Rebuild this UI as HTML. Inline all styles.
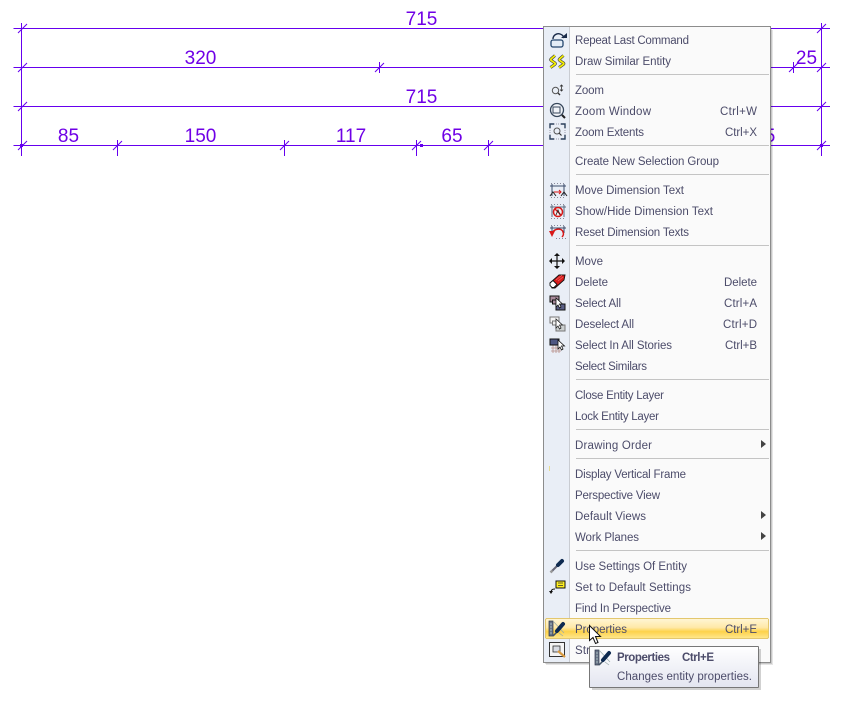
<!DOCTYPE html>
<html><head><meta charset="utf-8"><style>
html,body{margin:0;padding:0;background:#fff}
svg{display:block}
.d{font:19px "Liberation Sans",sans-serif;fill:#6f00e6;text-anchor:middle}
.m text{font:11.5px "Liberation Sans",sans-serif;fill:#4c4c6a}
</style></head><body>
<svg width="845" height="728" viewBox="0 0 845 728" xmlns="http://www.w3.org/2000/svg" shape-rendering="crispEdges">
<defs>
<linearGradient id="hl" x1="0" y1="0" x2="0" y2="1"><stop offset="0" stop-color="#fff6d6"/><stop offset=".45" stop-color="#ffe9a8"/><stop offset=".65" stop-color="#fdd24a"/><stop offset="1" stop-color="#ffe88f"/></linearGradient>
<linearGradient id="tt" x1="0" y1="0" x2="0" y2="1"><stop offset="0" stop-color="#fff"/><stop offset="1" stop-color="#e3e5f0"/></linearGradient>
</defs>
<rect width="845" height="728" fill="#fff"/>
<!-- drawing -->
<g stroke="#6600ee" stroke-width="1" fill="none">
<path d="M13.5 28.5H830M13.5 67.5H830M13.5 106.5H830M13.5 145.5H830M21.5 23V156M821.5 23V156"/>
<path d="M117.5 140V156M284.5 140V156M416.5 140V156M488.500 140V156M379.500 62V73M793.500 62V73"/>
<g shape-rendering="auto">
<path d="M18 33L27 24M18 72L27 63M18 111L27 102M18 150L27 141M113 150L122 141M280 150L289 141M412 150L421 141M484 150L493 141M375 72L384 63M789 72L798 63M817 33L826 24M817 72L826 63M817 111L826 102M817 150L826 141"/>
</g>
</g>
<g fill="#6600ee"><rect x="20" y="144" width="3" height="3"/><rect x="420" y="144" width="3" height="3"/><rect x="820" y="144" width="3" height="3"/></g>
<text class="d" x="421.5" y="25">715</text>
<text class="d" x="200.5" y="64">320</text>
<text class="d" x="421.5" y="103">715</text>
<text class="d" x="68.5" y="142">85</text>
<text class="d" x="200.5" y="142">150</text>
<text class="d" x="351" y="142">117</text>
<text class="d" x="452" y="142">65</text>
<text class="d" x="806.5" y="64">25</text>
<text class="d" x="770" y="142">5</text>
<!-- menu -->
<rect x="546" y="30" width="227" height="635" fill="#000" opacity=".1"/>
<rect x="545" y="28" width="227" height="636" fill="#000" opacity=".13"/>
<rect x="543.5" y="26.5" width="227" height="636" fill="#fafafa" stroke="#8c8c8c"/>
<rect x="544" y="27" width="25" height="635" fill="#e9eef6"/>
<rect x="569" y="27" width="1" height="635" fill="#c9ccd2"/>
<g fill="#c4c4c4"><rect x="576" y="74" width="193" height="1"/><rect x="576" y="145" width="193" height="1"/><rect x="576" y="174" width="193" height="1"/><rect x="576" y="245" width="193" height="1"/><rect x="576" y="379" width="193" height="1"/><rect x="576" y="429" width="193" height="1"/><rect x="576" y="458" width="193" height="1"/><rect x="576" y="550" width="193" height="1"/></g>
<rect x="545.5" y="618.5" width="223" height="20" rx="1.5" fill="url(#hl)" stroke="#e3c76e"/>
<g class="m" shape-rendering="auto">
<text x="575" y="44" textLength="114">Repeat Last Command</text>
<text x="575" y="65" textLength="96">Draw Similar Entity</text>
<text x="575" y="94" textLength="29">Zoom</text>
<text x="575" y="115" textLength="76">Zoom Window</text>
<text x="575" y="136" textLength="69">Zoom Extents</text>
<text x="575" y="165" textLength="144">Create New Selection Group</text>
<text x="575" y="194" textLength="109">Move Dimension Text</text>
<text x="575" y="215" textLength="138">Show/Hide Dimension Text</text>
<text x="575" y="236" textLength="114">Reset Dimension Texts</text>
<text x="575" y="265" textLength="28">Move</text>
<text x="575" y="286" textLength="33">Delete</text>
<text x="575" y="307" textLength="46">Select All</text>
<text x="575" y="328" textLength="59">Deselect All</text>
<text x="575" y="349" textLength="97">Select In All Stories</text>
<text x="575" y="370" textLength="72">Select Similars</text>
<text x="575" y="399" textLength="89">Close Entity Layer</text>
<text x="575" y="420" textLength="84">Lock Entity Layer</text>
<text x="575" y="449" textLength="77">Drawing Order</text>
<text x="575" y="478" textLength="111">Display Vertical Frame</text>
<text x="575" y="499" textLength="85">Perspective View</text>
<text x="575" y="520" textLength="71">Default Views</text>
<text x="575" y="541" textLength="64">Work Planes</text>
<text x="575" y="570" textLength="112">Use Settings Of Entity</text>
<text x="575" y="591" textLength="116">Set to Default Settings</text>
<text x="575" y="612" textLength="96">Find In Perspective</text>
<text x="575" y="633" textLength="52">Properties</text>
<text x="575" y="654" textLength="15">Str</text>
<text x="720" y="115" textLength="37">Ctrl+W</text>
<text x="725" y="136" textLength="32">Ctrl+X</text>
<text x="724" y="286" textLength="33">Delete</text>
<text x="724" y="307" textLength="33">Ctrl+A</text>
<text x="723" y="328" textLength="34">Ctrl+D</text>
<text x="725" y="349" textLength="32">Ctrl+B</text>
<text x="725" y="633" textLength="32">Ctrl+E</text>
</g>
<g fill="#444"><path d="M761 440l5 4-5 4zM761 511l5 4-5 4zM761 532l5 4-5 4z" shape-rendering="auto"/></g>
<!-- icons -->
<g shape-rendering="auto" fill="none">
<!-- repeat -->
<rect x="551" y="40" width="12" height="7" rx="2" stroke="#24466e" stroke-width="1.3" fill="#e4edf7"/>
<path d="M553 39c0-4 4-6 7-5s3 2 4 4" stroke="#1a2a48" stroke-width="1.4"/><path d="M561 38h6v-5z" fill="#1a2a48"/>
<!-- similar -->
<path d="M555 55.500L551 59Q550 60 552 61L555 63Q556 64 554 65L550.500 67.500M563.500 55.500L559.500 59Q558.500 60 560.500 61L563.500 63Q564.500 64 562.500 65L559 67.500" stroke="#444" stroke-width="3"/>
<path d="M555 55.500L551 59Q550 60 552 61L555 63Q556 64 554 65L550.500 67.500M563.500 55.500L559.500 59Q558.500 60 560.500 61L563.500 63Q564.500 64 562.500 65L559 67.500" stroke="#f6f000" stroke-width="1.700"/>
<!-- zoom -->
<circle cx="555.500" cy="90.500" r="3.200" stroke="#555" stroke-width="1"/><path d="M558 93l2 2" stroke="#333" stroke-width="1.300"/><path d="M561.500 85v6M560 86.500l1.500-1.500 1.500 1.500M560 89.500l1.500 1.500 1.500-1.500" stroke="#333" stroke-width=".8"/>
<!-- zoom window -->
<circle cx="557" cy="110" r="6.500" stroke="#36465a" stroke-width="1.300" fill="#f0f3f8"/><rect x="553" y="107" width="7" height="6" stroke="#36465a" stroke-width="1"/><path d="M562 115l3 3" stroke="#222" stroke-width="2"/>
<!-- zoom extents -->
<path d="M550 128v-4h4M561 124h4v4M565 135v4h-4M554 139h-4v-4" stroke="#2a3f5a" stroke-width="1.400"/><path d="M554 124h7M554 139h7M550 128v7M565 128v7" stroke="#99a" stroke-width="1" stroke-dasharray="1 1"/><circle cx="557" cy="131" r="3" stroke="#555"/><path d="M559 133l2.500 2.500" stroke="#333" stroke-width="1.200"/>
<!-- dim text icons -->
<path d="M552 184v12M564 184v12M550 186h16" stroke="#3c4c6a"/><path d="M551 183.500h15M551 197.500h15" stroke="#889" stroke-dasharray="1 2"/><path d="M550 196l3-4 3 4M561 196l3-4 3 4" stroke="#222"/><path d="M554 192h7M559 190l2 2-2 2" stroke="#d81818"/>
<path d="M552 205v12M564 205v12M550 207h16" stroke="#5c6c80"/><path d="M551 204.500h15M551 218.500h15" stroke="#889" stroke-dasharray="1 2"/><circle cx="558" cy="212" r="4.500" stroke="#d81818" stroke-width="1.500" fill="#f2f2f2"/><path d="M555 209l6 6" stroke="#d81818" stroke-width="1.300"/><path d="M556 215l2-5 2 5" stroke="#222" stroke-width=".8"/>
<path d="M552 226v10M564 226v7M550 228h16" stroke="#3c4c6a"/><path d="M551 225.500h15M556 238.500h10" stroke="#889" stroke-dasharray="1 2"/><path d="M552 233c3-5 10-5 11-1 1 2 0 4-1 5" stroke="#d81818" stroke-width="1.500"/><path d="M549 231l6 0-3 6z" fill="#d81818"/>
<!-- move -->
<path d="M557 254v14M550 261h14" stroke="#111" stroke-width="1.200"/><path d="M557 253l-3 3h6zM557 269l-3-3h6zM549 261l3-3v6zM565 261l-3-3v6z" fill="#111"/>
<!-- delete -->
<path d="M550 283l9-8 6 0-1 5-9 8h-3z" fill="#d81c1c" stroke="#111" stroke-width=".9"/><path d="M550 283l3-2.500 4 4-3 3h-2l-2-2z" fill="#fff" stroke="#111" stroke-width=".9"/><path d="M556 280l6-5M558 281l5-4" stroke="#f06a6a" stroke-width=".7"/>
<!-- select all -->
<rect x="550" y="296" width="9" height="6" fill="#a88a9c" stroke="#111"/><rect x="552.500" y="300" width="6" height="4" fill="#a88a9c" stroke="#111"/><rect x="556" y="304" width="9" height="6" fill="#5a5f86" stroke="#111"/><path d="M556 298l0 9 2-2 1.500 3 1.500-1-1.500-3h3z" fill="#fff" stroke="#111" stroke-width=".8"/>
<!-- deselect all -->
<rect x="550" y="317" width="9" height="6" fill="#f5f5f5" stroke="#777"/><rect x="552.500" y="321" width="6" height="4" fill="#eee" stroke="#777"/><rect x="556" y="325" width="9" height="6" fill="#ccd0d0" stroke="#777"/><path d="M556 319l0 9 2-2 1.500 3 1.500-1-1.500-3h3z" fill="#fff" stroke="#222" stroke-width=".8"/>
<!-- select stories -->
<path d="M551 345h10M551 348h10M551 351h10M553 343v10M556 343v10M559 343v10" stroke="#b8908a" stroke-width=".8"/><rect x="550" y="339" width="9" height="6" fill="#4e5782" stroke="#111"/><path d="M558 340l0 9 2-2 1.500 3 1.500-1-1.500-3h3z" fill="#fff" stroke="#111" stroke-width=".8"/>
<!-- stray mark -->
<path d="M549.500 466v5" stroke="#e8dc90"/>
<!-- eyedropper -->
<path d="M551 572l7-7" stroke="#667" stroke-width="2"/><path d="M558 565l4-4" stroke="#0e2a50" stroke-width="4" stroke-linecap="round"/><path d="M550.500 572.500l2-2" stroke="#999" stroke-width="2.500"/>
<!-- default settings -->
<rect x="556" y="581" width="9" height="7" fill="#ffef20" stroke="#111"/><path d="M558 583h5M558 585.500h5" stroke="#333" stroke-width=".8"/><path d="M555 589c-3 0-4 1-4 4" stroke="#111"/><path d="M549 591l2 3 2-3z" fill="#111"/>
<!-- properties -->
<g id="p"><rect x="549" y="621" width="4" height="15" fill="#6a7488" stroke="#2a3448" stroke-width=".7"/><path d="M553 621l11 12M559 633l4 3" stroke="#9aa" stroke-width=".7"/><path d="M553 636l5-5" stroke="#456" stroke-width="1.500"/><path d="M557 631l6-7" stroke="#0e2a50" stroke-width="4" stroke-linecap="round"/><path d="M550 624h2M550 627h2M550 630h2M550 633h2" stroke="#dfe" stroke-width=".6"/></g>
<!-- str icon -->
<rect x="549.500" y="642.500" width="15" height="14" fill="#f4f4f4" stroke="#333"/><rect x="553" y="646" width="7" height="6" fill="#d8dce4" stroke="#333" stroke-width=".8"/><path d="M558 651l7 6" stroke="#d89a40" stroke-width="2.200"/>
</g>
<!-- tooltip -->
<rect x="592" y="649" width="169" height="41" fill="#000" opacity=".18"/>
<rect x="589.500" y="646.500" width="169" height="41" rx="1" fill="url(#tt)" stroke="#777"/>
<g shape-rendering="auto" fill="none"><use href="#p" x="46" y="29"/></g>
<g class="m" shape-rendering="auto">
<text x="617" y="661" textLength="53" style="font-weight:bold">Properties</text>
<text x="682" y="661" textLength="32" style="font-weight:bold">Ctrl+E</text>
<text x="617" y="680" textLength="135">Changes entity properties.</text>
</g>
<!-- cursor -->
<path shape-rendering="auto" d="M589.500 625.500v15l3.500-3 2.500 6 2.500-1-2.500-6h5z" fill="#fff" stroke="#111" stroke-width="1"/>
</svg>
</body></html>
